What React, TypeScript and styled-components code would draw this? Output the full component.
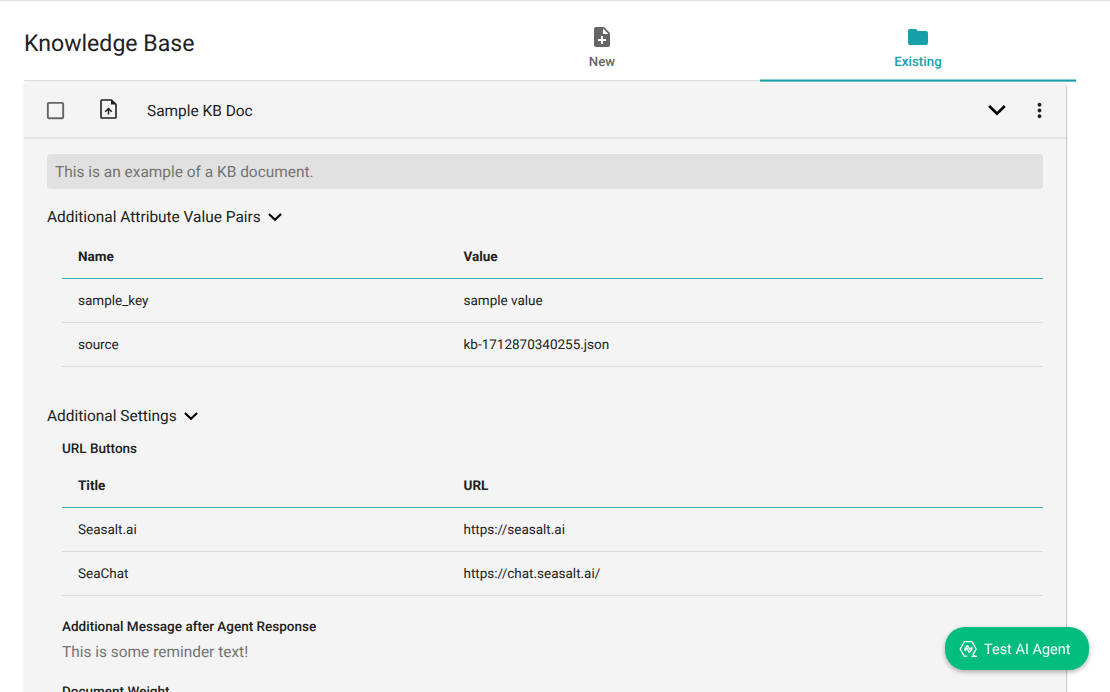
import React from "react";
import styled, { createGlobalStyle, css } from "styled-components";
import { MdNoteAdd, MdFolder, MdMoreVert, MdCheckBoxOutlineBlank } from "react-icons/md";

const GlobalStyle = createGlobalStyle`
  * { box-sizing: border-box; }
  html, body { margin: 0; height: 100%; overflow: hidden; background: #fff; }
  body {
    font-family: Roboto, "Liberation Sans", sans-serif;
    color: #212121;
    text-rendering: geometricPrecision;
  }
  svg { display: block; flex: none; }
`;

const Page = styled.div`
  height: 692px;
  overflow: hidden;
  border-top: 1px solid #e3e3e3;
  box-shadow: inset 0 1px 0 #f6f6f6;
  padding: 0 34px 0 24px;
`;

const Header = styled.header`
  display: flex;
  height: 81px;
  box-shadow: inset 0 -1px 0 #f4f4f4, inset 0 -2px 0 #dedede;
`;

const Title = styled.h1`
  width: 420px;
  margin: 0;
  padding-top: 28px;
  font-size: 23.1px;
  font-weight: 400;
  line-height: 30px;
`;

const Tab = styled.div<{ $active?: boolean }>`
  flex: 1;
  display: flex;
  flex-direction: column;
  align-items: center;
  padding-top: 24px;
  font-size: 13.2px;
  font-weight: 500;
  line-height: 17px;
  letter-spacing: 0.1px;
  color: #666;
  ${(p) => p.$active && css`
    color: #18a0a8;
    box-shadow: inset 0 -1px 0 #6cc3c8, inset 0 -2px 0 #18a0a8, inset 0 -3px 0 #8ed1d5;
  `}
  svg { margin-bottom: 5px; }
`;

const Card = styled.section`
  width: 1042px;
  height: 720px;
  margin-top: 1px;
  border-radius: 4px;
  background: #f4f4f4;
  box-shadow: 1px 1px 1px rgba(0, 0, 0, 0.2), 0 0 2px rgba(0, 0, 0, 0.16);
`;

const CardHeader = styled.div`
  display: flex;
  align-items: center;
  height: 56px;
  padding: 0 15px 0 20px;
  border-bottom: 2px solid #e6e6e6;
  font-size: 15.45px;
`;

const DocIcon = styled.div`
  margin: -3px 30px 0 33px;
`;

const DocName = styled.span`
  padding-top: 2px;
`;

const Actions = styled.div`
  display: flex;
  align-items: center;
  gap: 22px;
  margin-left: auto;
`;

const CardBody = styled.div`
  padding: 15px 23px 0;
`;

const Content = styled.div`
  height: 34.5px;
  padding: 1px 8px 0;
  border-radius: 4px;
  background: #e1e1e1;
  color: #737373;
  font-size: 15.45px;
  line-height: 34px;
`;

const SectionTitle = styled.div<{ $top: number }>`
  display: flex;
  align-items: center;
  gap: 7px;
  height: 24px;
  margin-top: ${(p) => p.$top}px;
  font-size: 15.45px;
`;

const Indent = styled.div<{ $top?: number }>`
  padding: ${(p) => p.$top ?? 0}px 0 0 15px;
`;

const Label = styled.div<{ $top: number }>`
  margin-top: ${(p) => p.$top}px;
  font-size: 13.53px;
  font-weight: 500;
  line-height: 20px;
`;

const Note = styled.div`
  margin-top: 4px;
  color: #737373;
  font-size: 15.45px;
  line-height: 22px;
`;

const Table = styled.div<{ $top?: number }>`
  display: flex;
  flex-direction: column;
  margin-top: ${(p) => p.$top ?? 0}px;
`;

const Row = styled.div<{ $head?: boolean }>`
  display: grid;
  grid-template-columns: 385.5px 1fr;
  align-items: center;
  height: 44px;
  padding: 1px 0 0 16px;
  border-bottom: 1px solid ${(p) => (p.$head ? "#35b3b9" : "#dcdcdc")};
  font-size: 13.5px;
  line-height: 16px;
  font-weight: ${(p) => (p.$head ? 700 : 400)};
`;

const AgentButton = styled.button`
  position: fixed;
  right: 21px;
  bottom: 22px;
  display: flex;
  align-items: center;
  gap: 6px;
  width: 144px;
  height: 43px;
  padding: 1px 0 0 14px;
  border: 0;
  border-radius: 20px;
  background: #02be7e;
  color: #fff;
  font-family: inherit;
  font-size: 14.5px;
  text-rendering: inherit;
  white-space: nowrap;
  box-shadow: 0 2px 5px rgba(0, 0, 0, 0.3);
`;

const Chevron = ({ size }: { size: number }) => (
  <svg width={size} height={size} viewBox="0 0 18 18" fill="none" stroke="#000" strokeWidth="2.7">
    <path d="M1.2 5 9 12.6 16.8 5" />
  </svg>
);

const UploadDoc = () => (
  <svg width="17" height="20" viewBox="0 0 17 20" fill="none" stroke="#212121" strokeWidth="1.6">
    <path d="M2.1 1H11.4L16 5.4V18.2Q16 19 15.2 19H1.8Q1 19 1 18.2V1.8Q1 1 1.8 1Z" />
    <path d="M11 1V5.6H16Z" fill="#212121" stroke="none" />
    <path d="M8.5 15.6V9.8M5.2 12.7 8.5 9.5 11.8 12.7" strokeWidth="1.5" />
  </svg>
);

const AgentLogo = () => (
  <svg width="19" height="18" viewBox="0 0 19 18" fill="none" stroke="#fff" strokeWidth="1.3" strokeLinecap="round" strokeLinejoin="round">
    <path d="M7.8 16.2H5.3L1.2 9 5.3 1.7H13L17.2 9 14 14.2 15.4 16" />
    <path d="M13 16.3H17.6" />
    <path d="M6 10.6V8.4L8.4 5.4 10.8 9.6 12.8 7.2V9.6L10.2 12.6 8 8.2Z" />
  </svg>
);

type DataTableProps = { head: [string, string]; rows: [string, string][]; top?: number };

const DataTable = ({ head, rows, top }: DataTableProps) => (
  <Table $top={top}>
    <Row $head><span>{head[0]}</span><span>{head[1]}</span></Row>
    {rows.map(([a, b]) => (
      <Row key={a}><span>{a}</span><span>{b}</span></Row>
    ))}
  </Table>
);

export default function App() {
  return (
    <>
      <GlobalStyle />
      <Page>
        <Header>
          <Title>Knowledge Base</Title>
          <Tab><MdNoteAdd size={24} />New</Tab>
          <Tab $active><MdFolder size={24} />Existing</Tab>
        </Header>
        <Card>
          <CardHeader>
            <MdCheckBoxOutlineBlank size={23} color="#666" />
            <DocIcon><UploadDoc /></DocIcon>
            <DocName>Sample KB Doc</DocName>
            <Actions>
              <Chevron size={18} />
              <MdMoreVert size={23} />
            </Actions>
          </CardHeader>
          <CardBody>
            <Content>This is an example of a KB document.</Content>
            <SectionTitle $top={16.5}>Additional Attribute Value Pairs<Chevron size={14} /></SectionTitle>
            <Indent $top={6}>
              <DataTable
                head={["Name", "Value"]}
                rows={[["sample_key", "sample value"], ["source", "kb-1712870340255.json"]]}
              />
            </Indent>
            <SectionTitle $top={37}>Additional Settings<Chevron size={14} /></SectionTitle>
            <Indent>
              <Label $top={11}>URL Buttons</Label>
              <DataTable
                top={5}
                head={["Title", "URL"]}
                rows={[["Seasalt.ai", "https://seasalt.ai"], ["SeaChat", "https://chat.seasalt.ai/"]]}
              />
              <Label $top={21}>Additional Message after Agent Response</Label>
              <Note>This is some reminder text!</Note>
              <Label $top={19}>Document Weight</Label>
            </Indent>
          </CardBody>
        </Card>
        <AgentButton><AgentLogo />Test AI Agent</AgentButton>
      </Page>
    </>
  );
}
